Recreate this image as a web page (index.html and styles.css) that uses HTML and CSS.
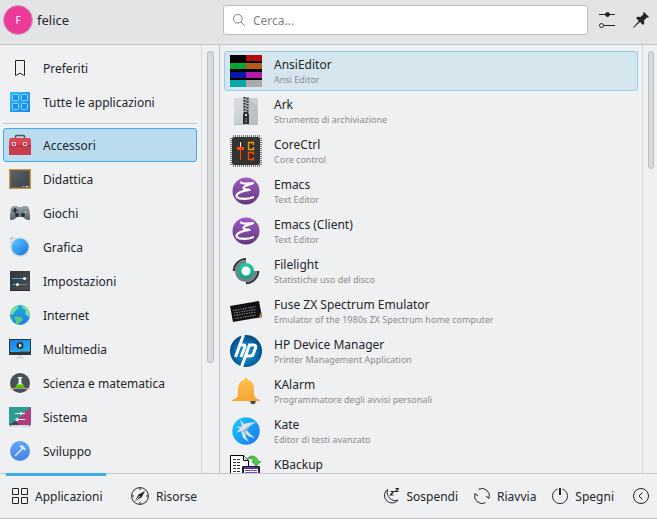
FILE: index.html
```html
<!DOCTYPE html>
<html lang="it">
<head>
<meta charset="utf-8">
<meta name="viewport" content="width=device-width, initial-scale=1">
<title>Applicazioni</title>
<link rel="stylesheet" href="styles.css">
</head>
<body>
<header class="header">
  <button class="user" type="button"><span class="avatar">F</span><span class="user-name">felice</span></button>
  <div class="tools">
    <label class="search">
      <svg width="12" height="12" viewBox="0 0 12 12" fill="none" stroke="#7a8086"><circle cx="4.8" cy="4.8" r="4.3"/><path d="M7.9 7.9l3.8 3.8"/></svg>
      <input class="search-input" type="search" placeholder="Cerca..." aria-label="Cerca">
    </label>
    <button class="tool" type="button" aria-label="Configura">
      <svg width="16" height="16" viewBox="0 0 16 16" fill="none" stroke="#232629"><path d="M0 2.500h16M5 13.500h11"/><circle cx="8.500" cy="2.500" r="2" fill="#232629"/><circle cx="2.500" cy="13.500" r="2"/></svg>
    </button>
    <button class="tool" type="button" aria-label="Mantieni aperto">
      <svg width="16" height="16" viewBox="0 0 16 16" fill="#232629"><path d="M11 0l5 5-1 .8-1.200-.2-2.800 3 .3 3-1.300 1.300-3-3L.8 15.700 0 16l.3-.8 5.500-6.300-2.700-2.800 1.300-1.300 3.100.3 2.900-2.800-.3-1.300z"/></svg>
    </button>
  </div>
</header>

<main class="main">
  <section class="pane sidebar">
    <nav class="categories" aria-label="Categorie">
      <button class="category" type="button">
        <svg width="22" height="22" viewBox="0 0 22 22"><path d="M6.500 3.500h9v15l-1-.3-3.500-2-3.500 2-1 .3z" fill="none" stroke="#232629"/></svg>
        <span>Preferiti</span>
      </button>
      <button class="category" type="button">
        <svg width="22" height="22" viewBox="0 0 22 22"><defs><linearGradient id="all" x2="1" y2="1"><stop stop-color="#29c0fa"/><stop offset="1" stop-color="#1d83ee"/></linearGradient></defs><path fill="url(#all)" d="M1 1h20v20H1z"/><g fill="#1b8deb" stroke="#8fdafb"><rect x="3.500" y="3.500" width="6" height="6" rx="1"/><rect x="12.500" y="3.500" width="6" height="6" rx="1"/><rect x="3.500" y="12.500" width="6" height="6" rx="1"/><rect x="12.500" y="12.500" width="6" height="6" rx="1"/></g></svg>
        <span>Tutte le applicazioni</span>
      </button>
      <hr class="divider">
      <button class="category selected" type="button" aria-current="true">
        <svg width="22" height="22" viewBox="0 0 22 22"><path d="M6.500 5V2.500Q6.500 1.500 7.500 1.500h7q1 0 1 1V5" fill="none" stroke="#4b5a63" stroke-width="1.500"/><path fill="#da4453" d="M1 4h20l1 3v14H0V7z"/><path fill="#b9344a" d="M0 11h22v2H0z"/><path fill="#c93c4e" d="M0 13h22v8H0z"/><g fill="#a92f40" stroke="#f1d5d8"><path d="M3.500 8.500h3v3h-3zM14.500 8.500h3v3h-3z"/></g></svg>
        <span>Accessori</span>
      </button>
      <button class="category" type="button">
        <svg width="22" height="22" viewBox="0 0 22 22"><defs><linearGradient id="board" x2="1" y2="1"><stop stop-color="#566169"/><stop offset="1" stop-color="#3b444b"/></linearGradient></defs><path fill="#c39550" d="M0 1h22v20H0z"/><path fill="#8b6632" d="M1 2h20v18H1z"/><path fill="url(#board)" d="M2 3h18v16H2z"/><path fill="#3daee9" d="M13 18h3v1h-3z"/><path fill="#fff" d="M17 18h2v1h-2z"/></svg>
        <span>Didattica</span>
      </button>
      <button class="category" type="button">
        <svg width="22" height="22" viewBox="0 0 22 22"><defs><linearGradient id="pad" x2="0" y2="1"><stop stop-color="#9ba3a9"/><stop offset="1" stop-color="#59636b"/></linearGradient></defs><path fill="url(#pad)" d="M4 4h4l1 1h4l1-1h4l2 2 1 7v4l-2 1-3-1-2-2H8l-2 2-3 1-2-1v-4l1-7z"/><path d="M3.500 8.500h5M6 6v5" stroke="#252b30" stroke-width="1.600"/><circle cx="8" cy="13" r="1.900" fill="#252b30"/><circle cx="14" cy="13" r="1.900" fill="#252b30"/><circle cx="16.500" cy="6.500" r="1" fill="#3dce9a"/><circle cx="14.700" cy="8.300" r="1" fill="#418cce"/><circle cx="18.300" cy="8.300" r="1" fill="#e05c69"/><circle cx="16.500" cy="10" r="1" fill="#e7a36a"/><path d="M1.500 17l1 1M20.500 17l-1 1" stroke="#31383d"/></svg>
        <span>Giochi</span>
      </button>
      <button class="category" type="button">
        <svg width="22" height="22" viewBox="0 0 22 22"><defs><linearGradient id="globe" x2="1" y2="1"><stop stop-color="#64c5fb"/><stop offset=".55" stop-color="#2f9bf2"/><stop offset="1" stop-color="#2368c5"/></linearGradient></defs><path fill="#dcdfe1" d="M1 1h9c7 0 11 4 11 10s-4 10-10 10S1 17 1 10z"/><circle cx="11" cy="11" r="8.500" fill="url(#globe)"/><path d="M7 4v14M11 3v16M15 4v14M3 8h16M3 12h16M5 16h12" stroke="#fff" stroke-opacity=".06"/><path fill="#3f9ce8" d="M2 2h1v1H2z"/></svg>
        <span>Grafica</span>
      </button>
      <button class="category" type="button">
        <svg width="22" height="22" viewBox="0 0 22 22"><defs><linearGradient id="set" x2="1" y2="1"><stop stop-color="#31363b"/><stop offset="1" stop-color="#4a5056"/></linearGradient></defs><path fill="url(#set)" d="M1 1h20v20H1z"/><path fill="#24292d" d="M1 20h20v1H1z"/><path d="M3 8.500h11M4 14.500h4" stroke="#3daee9"/><path d="M15 8.500h4M9 14.500h9" stroke="#757b80"/><circle cx="15.500" cy="8.500" r="1.500" fill="#fff"/><circle cx="8.500" cy="14.500" r="1.500" fill="#fff"/></svg>
        <span>Impostazioni</span>
      </button>
      <button class="category" type="button">
        <svg width="22" height="22" viewBox="0 0 22 22"><defs><linearGradient id="earth" x2="0" y2="1"><stop stop-color="#1bb1d0"/><stop offset="1" stop-color="#2876ef"/></linearGradient></defs><circle cx="11" cy="11" r="10" fill="url(#earth)"/><path fill="#7adf9b" d="M4 4l5-2.700L8.500 3l1 1.500L7 6 5 9l-2 2-1.700-1.500C1.500 7 3 5 4 4zM14 1.500c4 1 6.800 5 7 9.500l-1 2-3-2-1-3 1.500-1.500L15 5l-2-1.500z"/><path fill="#58c985" d="M5 13l4-.7 5 2.200-1 2.500-2.500 1.700-.5 2.200-3-.9-.5-4zM1.500 13l1.500.5 1 3-.5.500z"/></svg>
        <span>Internet</span>
      </button>
      <button class="category" type="button">
        <svg width="22" height="22" viewBox="0 0 22 22"><defs><linearGradient id="tv" x2="1" y2="1"><stop stop-color="#1f7be7"/><stop offset="1" stop-color="#20bafa"/></linearGradient></defs><path fill="#30363b" d="M0 1h22v16H0z"/><path fill="url(#tv)" d="M1 2h20v11H1z"/><path d="M1 13.500h10" stroke="#3daee9"/><path d="M11 13.500h10" stroke="#656c72"/><circle cx="11" cy="7.500" r="3.500" fill="#31363b"/><path fill="#fff" d="M10 5.500l3 2-3 2z"/><path fill="#d7dcde" d="M9 17h4v2h2v2H7v-2h2z"/></svg>
        <span>Multimedia</span>
      </button>
      <button class="category" type="button">
        <svg width="22" height="22" viewBox="0 0 22 22"><circle cx="11" cy="11" r="10" fill="#465057"/><path fill="#dfa85a" d="M1 16h20v1H1z"/><path fill="#8a9398" d="M8 5h6v1h-1v5l3 6H6l3-6V6H8z"/><path fill="#ecf0f1" d="M9 5h4v1h-1v5l2 2H8l2-2V6H9z"/><path fill="#60bc12" d="M8 12h6l2 4H6z"/><path fill="#87dc39" d="M8 12h6v1H8z"/></svg>
        <span>Scienza e matematica</span>
      </button>
      <button class="category" type="button">
        <svg width="22" height="22" viewBox="0 0 22 22"><path fill="#2a9d95" d="M0 1h22v20H0z"/><path fill="#b43c82" d="M22 1v18H9l-3-4z"/><path fill="#3e4b4c" d="M0 19l6-4 5 4z"/><path fill="#d5d8da" d="M0 19h22v2H0z"/><path fill="#60676b" d="M1 19h1v1H1zM20 19h1v1h-1z"/><g stroke="#fff" fill="#fff"><path d="M6 7.500h10M8 13.500h8"/><circle cx="12" cy="7.500" r="1"/><circle cx="8" cy="13.500" r="1.200" fill="none"/></g></svg>
        <span>Sistema</span>
      </button>
      <button class="category" type="button">
        <svg width="22" height="22" viewBox="0 0 22 22"><defs><linearGradient id="dev" x2="0" y2="1"><stop stop-color="#61a7f6"/><stop offset="1" stop-color="#4581e4"/></linearGradient></defs><circle cx="11" cy="11" r="10" fill="url(#dev)"/><path d="M6 16l8-8" stroke="#dfeaff" stroke-width="1.600"/><path fill="#dfeaff" d="M10 6l3-1 4 4-1.500 1.500-1.500-1.500-1.500-1z"/></svg>
        <span>Sviluppo</span>
      </button>
    </nav>
    <div class="scroll"><div class="thumb thumb-long"></div></div>
  </section>

  <section class="pane">
    <div class="apps">
      <button class="app hovered" type="button">
        <svg width="32" height="32" viewBox="0 0 32 32" shape-rendering="crispEdges"><path d="M0 0h32v32H0z"/><path fill="#b10b0b" d="M16 0h16v6H16z"/><path fill="#06a52e" d="M0 8h16v6H0z"/><path fill="#b55a18" d="M16 8h16v6H16z"/><path fill="#0817a6" d="M0 17h16v6H0z"/><path fill="#b11bac" d="M16 17h16v6H16z"/><path fill="#05a9aa" d="M0 25h16v7H0z"/><path fill="#aaa" d="M16 25h16v7H16z"/></svg>
        <span class="text"><span class="title">AnsiEditor</span><span class="sub">Ansi Editor</span></span>
      </button>
      <button class="app" type="button">
        <svg width="32" height="32" viewBox="0 0 32 32"><defs><linearGradient id="ark" x2="1" y2="1"><stop stop-color="#dce0e2"/><stop offset="1" stop-color="#bbc1c5"/></linearGradient></defs><path fill="url(#ark)" d="M4 3h24v26H4z"/><path fill="#b5bbbf" d="M4 29h24v1H4z"/><path fill="#b4bbc0" d="M19 3l9 9v17h-9z" opacity=".55"/><path fill="#a4abb0" d="M13 2h6v27h-6z"/><path d="M14.500 2v15M17.500 3v14" stroke="#292e32" stroke-width="2" stroke-dasharray="1.500 1.500"/><path fill="#292e32" d="M14 17h4l1 3v9h-6v-9z"/><path fill="#d8dcde" d="M15 19h2v2h-2z"/><path fill="#555b60" d="M15 23h2v5h-2z"/></svg>
        <span class="text"><span class="title">Ark</span><span class="sub">Strumento di archiviazione</span></span>
      </button>
      <button class="app" type="button">
        <svg width="32" height="32" viewBox="0 0 32 32"><path d="M3 1h27M3 31h27" stroke="#777" stroke-width="2" stroke-dasharray="1 1"/><path d="M1 3v27M31 3v27" stroke="#777" stroke-width="2" stroke-dasharray="1 1"/><rect x="2" y="2" width="28" height="28" rx="2" fill="#333"/><path fill="#eee" d="M10 7h1v6h-1z"/><path fill="#ff4500" d="M7 12h7v3h-3v10h-1V15H7z"/><path d="M23.500 10V7.500h-5v7h5V12" fill="none" stroke="#ff9d00" stroke-width="1.300"/><path d="M23.500 20v-2.500h-5v7h5V22" fill="none" stroke="#ff4500" stroke-width="1.300"/></svg>
        <span class="text"><span class="title">CoreCtrl</span><span class="sub">Core control</span></span>
      </button>
      <button class="app" type="button">
        <svg width="32" height="32" viewBox="0 0 32 32"><defs><linearGradient id="emacs" x2="0" y2="1"><stop stop-color="#a25bc5"/><stop offset="1" stop-color="#62377d"/></linearGradient><g id="emacs-mark"><circle cx="16" cy="16" r="13.500" fill="url(#emacs)"/><path d="M11 7.500c2.500 2.500 7 .5 12 .7-5 1.800-9.500 3-9.500 4.800 0 1.600 3.500 1.500 6 1.800-6 .7-13 3.200-13 5.900 0 3.500 10 4 16.500 1.500" fill="none" stroke="#fff" stroke-width="2.200" stroke-linecap="round" stroke-linejoin="round"/></g></defs><use href="#emacs-mark"/></svg>
        <span class="text"><span class="title">Emacs</span><span class="sub">Text Editor</span></span>
      </button>
      <button class="app" type="button">
        <svg width="32" height="32" viewBox="0 0 32 32"><use href="#emacs-mark"/></svg>
        <span class="text"><span class="title">Emacs (Client)</span><span class="sub">Text Editor</span></span>
      </button>
      <button class="app" type="button">
        <svg width="32" height="32" viewBox="0 0 32 32"><defs><linearGradient id="light" x2="0" y2="1"><stop stop-color="#20c9a2"/><stop offset="1" stop-color="#16a085"/></linearGradient></defs><path fill="#31363b" d="M16 3A13.500 13.500 0 0 0 2.700 16H5A11 11 0 0 1 16 5zM29.300 16A13.500 13.500 0 0 1 16 29.300V27a11 11 0 0 0 11-11z"/><path fill="#75808a" d="M16 5A11 11 0 0 0 5 16a11 11 0 0 0 7 10.200L16 27a11 11 0 0 0 11-11h-4L16 9z"/><circle cx="16" cy="16" r="6.300" fill="#fff" stroke="url(#light)" stroke-width="3.600"/></svg>
        <span class="text"><span class="title">Filelight</span><span class="sub">Statistiche uso del disco</span></span>
      </button>
      <button class="app" type="button">
        <svg width="32" height="32" viewBox="0 0 32 32"><path fill="#101112" d="M0 11l29-5 3 16-29 5z"/><g fill="none" stroke="#85888a" stroke-width="1.100" stroke-dasharray="1.500 1"><path d="M3 15.500l23-3.800M4 18l22-3.700M4 20.500l22-3.500M5 23.500l21-3.500"/></g><path d="M29 23l2-5" stroke="#d73b3d" stroke-width="1.200"/><path d="M30 23l1.500-4" stroke="#e0c238"/><path d="M31 22.500l.6-2" stroke="#2bb04d"/></svg>
        <span class="text"><span class="title">Fuse ZX Spectrum Emulator</span><span class="sub">Emulator of the 1980s ZX Spectrum home computer</span></span>
      </button>
      <button class="app" type="button">
        <svg width="32" height="32" viewBox="0 0 32 32"><defs><radialGradient id="hp" cx=".5" cy=".55"><stop stop-color="#1693d2"/><stop offset=".65" stop-color="#0873b5"/><stop offset="1" stop-color="#034e88"/></radialGradient></defs><circle cx="16" cy="16" r="16" fill="url(#hp)"/><g fill="none" stroke="#fff" stroke-width="3"><path d="M13.500 0L5.500 22M10 10h3.500q2 0 1.300 2L11 22"/><path d="M11.500 32l8-22h4q3 0 2 3l-2 5.500q-.8 2.500-3 2.500h-4"/></g></svg>
        <span class="text"><span class="title">HP Device Manager</span><span class="sub">Printer Management Application</span></span>
      </button>
      <button class="app" type="button">
        <svg width="32" height="32" viewBox="0 0 32 32"><defs><linearGradient id="bell" x2="0" y2="1"><stop stop-color="#fdc04a"/><stop offset="1" stop-color="#f7a535"/></linearGradient></defs><circle cx="23" cy="26.500" r="2.700" fill="#4d4d4d"/><path fill="url(#bell)" d="M14 5q0-2 2-2t2 2q6 2 6 9v5q0 4 6 6v1H2v-1q6-2 6-6v-5q0-7 6-9z"/></svg>
        <span class="text"><span class="title">KAlarm</span><span class="sub">Programmatore degli avvisi personali</span></span>
      </button>
      <button class="app" type="button">
        <svg width="32" height="32" viewBox="0 0 32 32"><defs><linearGradient id="kate" x2="1" y2="1"><stop stop-color="#17d0fb"/><stop offset="1" stop-color="#1a70f6"/></linearGradient></defs><circle cx="16" cy="16" r="13.700" fill="url(#kate)"/><path fill="#d9e5ee" d="M10 5l4 4 4-1 8-1-6 4-4 3.500 3 3.500 6 5-6-1.500-4-3.500 1 4 3 5-6-4-2-7-5 2 4-4.500L6 12l6-.5z"/><path fill="#9db8cd" d="M12 16l4-3 6-4-5 6-2 4z"/></svg>
        <span class="text"><span class="title">Kate</span><span class="sub">Editor di testi avanzato</span></span>
      </button>
      <button class="app" type="button">
        <svg width="32" height="32" viewBox="0 0 32 32"><path d="M.5.5h13l5 5v20H.5z" fill="#fff" stroke="#000"/><path d="M13.500.5v5h5" fill="#ddd" stroke="#000"/><path d="M3 4.500h7M3 7.500h8M3 10.500h8M3 13.500h8M3 16.500h7" stroke="#333" stroke-dasharray="3 1"/><path d="M17 4q4-5 9-1.500 2 1.500 2 4h3l-5 4.500-4-4.500h2q-1-4-7-2.500z" fill="#4bcd45" stroke="#238d29" stroke-width=".7"/><rect x="12" y="11" width="18" height="20" rx="1" fill="#222"/><path fill="#5f2eb7" d="M14 12h14v2H14z"/><path fill="#fff" d="M14 14h14v9H14z"/><path d="M15 15.500h12M15 17.500h12" stroke="#7750bd"/></svg>
        <span class="text"><span class="title">KBackup</span></span>
      </button>
    </div>
    <div class="scroll scroll-end"><div class="thumb thumb-short"></div></div>
  </section>
</main>

<footer class="footer">
  <div class="tabs">
    <button class="action tab active" type="button">
      <svg width="16" height="16" viewBox="0 0 16 16" fill="none" stroke="#232629"><path d="M.5.5h6v6h-6zM9.500.5h6v6h-6zM.5 9.500h6v6h-6zM9.500 9.500h6v6h-6z"/></svg>
      <span>Applicazioni</span>
    </button>
    <button class="action" type="button">
      <svg width="18" height="18" viewBox="0 0 18 18"><circle cx="9" cy="9" r="8.400" fill="none" stroke="#232629"/><path d="M9 1v2M9 15v2M1 9h2M15 9h2" stroke="#232629"/><path fill="#232629" d="M14 4l-3.500 6.500L4 14l3.500-6.500z"/><path d="M5.500 12.500L9 9" stroke="#eff0f1"/></svg>
      <span>Risorse</span>
    </button>
  </div>
  <div class="session">
    <button class="action" type="button">
      <svg width="16" height="16" viewBox="0 0 16 16" fill="none" stroke="#232629"><path d="M4.500 1.500A7.500 7.500 0 1 0 15 12 C9 14.500 2.500 8.500 4.500 1.500z"/><path d="M7.500 3.500h3l-3 3.500h3M12.500.5h3l-3 3h3" stroke-width="1.200"/></svg>
      <span>Sospendi</span>
    </button>
    <button class="action" type="button">
      <svg width="16" height="16" viewBox="0 0 16 16" fill="none" stroke="#232629"><path d="M4.500 1.300A7.500 7.500 0 0 1 15 10.500l-3-2.500M11.500 14.700A7.500 7.500 0 0 1 1 5.500L4 8"/></svg>
      <span>Riavvia</span>
    </button>
    <button class="action" type="button">
      <svg width="16" height="16" viewBox="0 0 16 16" fill="none" stroke="#232629"><path d="M5.500 1A7.500 7.500 0 1 0 10.500 1"/><path d="M8 0v7" stroke-width="2"/></svg>
      <span>Spegni</span>
    </button>
    <button class="action more" type="button" aria-label="Altro">
      <svg width="16" height="16" viewBox="0 0 16 16" fill="none" stroke="#232629"><circle cx="8" cy="8" r="7.500"/><path d="M9.500 4.500L6 8l3.500 3.500"/></svg>
    </button>
  </div>
</footer>
</body>
</html>
```

FILE: styles.css
```css
* {
  box-sizing: border-box;
}

body {
  margin: 0;
  height: 100vh;
  display: grid;
  grid-template-rows: auto minmax(0, 1fr) auto;
  background: #eff0f1;
  color: #232629;
  font: 12px/19px "Noto Sans", sans-serif;
}

button,
input {
  margin: 0;
  padding: 0;
  border: 0;
  background: none;
  color: inherit;
  font: inherit;
  text-align: left;
}

svg {
  display: block;
  flex: none;
}

.header,
.main {
  display: grid;
  grid-template-columns: 220px minmax(0, 1fr);
}

.header {
  padding: 5px 0 9px;
  background: #e3e4e6;
  border-bottom: 1px solid #c2c4c6;
}

.user {
  display: flex;
  align-items: center;
  gap: 4px;
  padding-left: 3px;
}

.avatar {
  width: 30px;
  height: 30px;
  border: 1px solid #c4a9b9;
  border-radius: 50%;
  background: #eb3a98;
  color: #fff;
  font-size: 10px;
  line-height: 28px;
  text-align: center;
}

.user-name {
  font-size: 13px;
  line-height: 18px;
}

.tools {
  display: flex;
  align-items: center;
  padding: 0 8px 0 3px;
}

.search {
  flex: 1;
  display: flex;
  align-items: center;
  gap: 8px;
  height: 30px;
  margin-right: 11px;
  padding: 0 9px;
  border: 1px solid #bbbdbf;
  border-radius: 3px;
  background: #fff;
}

.search-input {
  flex: 1;
  min-width: 0;
  outline: 0;
}

.search-input::placeholder {
  color: #7f8488;
  opacity: 1;
}

.tool + .tool {
  margin-left: 18px;
}

.pane {
  display: flex;
  min-width: 0;
  min-height: 0;
}

.sidebar {
  border-right: 1px solid #c0c2c4;
}

.categories,
.apps {
  flex: 1;
  min-width: 0;
  overflow: hidden;
}

.categories {
  padding: 6px 4px 0 3px;
}

.category {
  display: flex;
  align-items: center;
  gap: 12px;
  width: 100%;
  height: 34px;
  padding: 0 5px;
  border: 1px solid transparent;
  border-radius: 3px;
}

.category.selected {
  border-color: #3daee9;
  background: #bbdcee;
}

.divider {
  height: 1px;
  margin: 4px 0;
  border: 0;
  background: #c2c4c6;
}

.apps {
  padding: 6px 4px 0;
}

.app {
  display: flex;
  align-items: center;
  gap: 12px;
  width: 100%;
  height: 40px;
  padding: 0 5px;
  border: 1px solid transparent;
  border-radius: 3px;
}

.app.hovered {
  border-color: #94cfee;
  background: #d5e6ef;
}

.text {
  display: flex;
  flex-direction: column;
  min-width: 0;
  min-height: 32px;
  white-space: nowrap;
}

.sub {
  color: #898c8f;
  font-size: 9px;
  line-height: 12px;
}

.scroll {
  flex: none;
  width: 18px;
  padding: 6px 5px 0;
  border-left: 1px solid #d6d8d9;
}

.scroll-end {
  width: 15px;
  padding-right: 3px;
}

.thumb {
  border: 1px solid #bbbebf;
  border-radius: 3px;
  background: #d7dada;
}

.thumb-long {
  height: 74%;
}

.thumb-short {
  height: 28%;
}

.footer {
  display: flex;
  justify-content: space-between;
  height: 46px;
  padding: 0 8px 0 6px;
  border-top: 1px solid #c5c7c9;
  border-bottom: 1px solid #bfc1c3;
}

.tabs,
.session {
  display: flex;
}

.tabs {
  gap: 25px;
}

.session {
  gap: 16px;
}

.action {
  display: flex;
  align-items: center;
  gap: 7px;
}

.tab {
  position: relative;
  width: 100px;
  padding-left: 6px;
}

.tab.active::before {
  content: "";
  position: absolute;
  top: -1px;
  left: 0;
  right: 0;
  height: 3px;
  background: #3daee9;
}

.more {
  margin-left: 3px;
}
```
